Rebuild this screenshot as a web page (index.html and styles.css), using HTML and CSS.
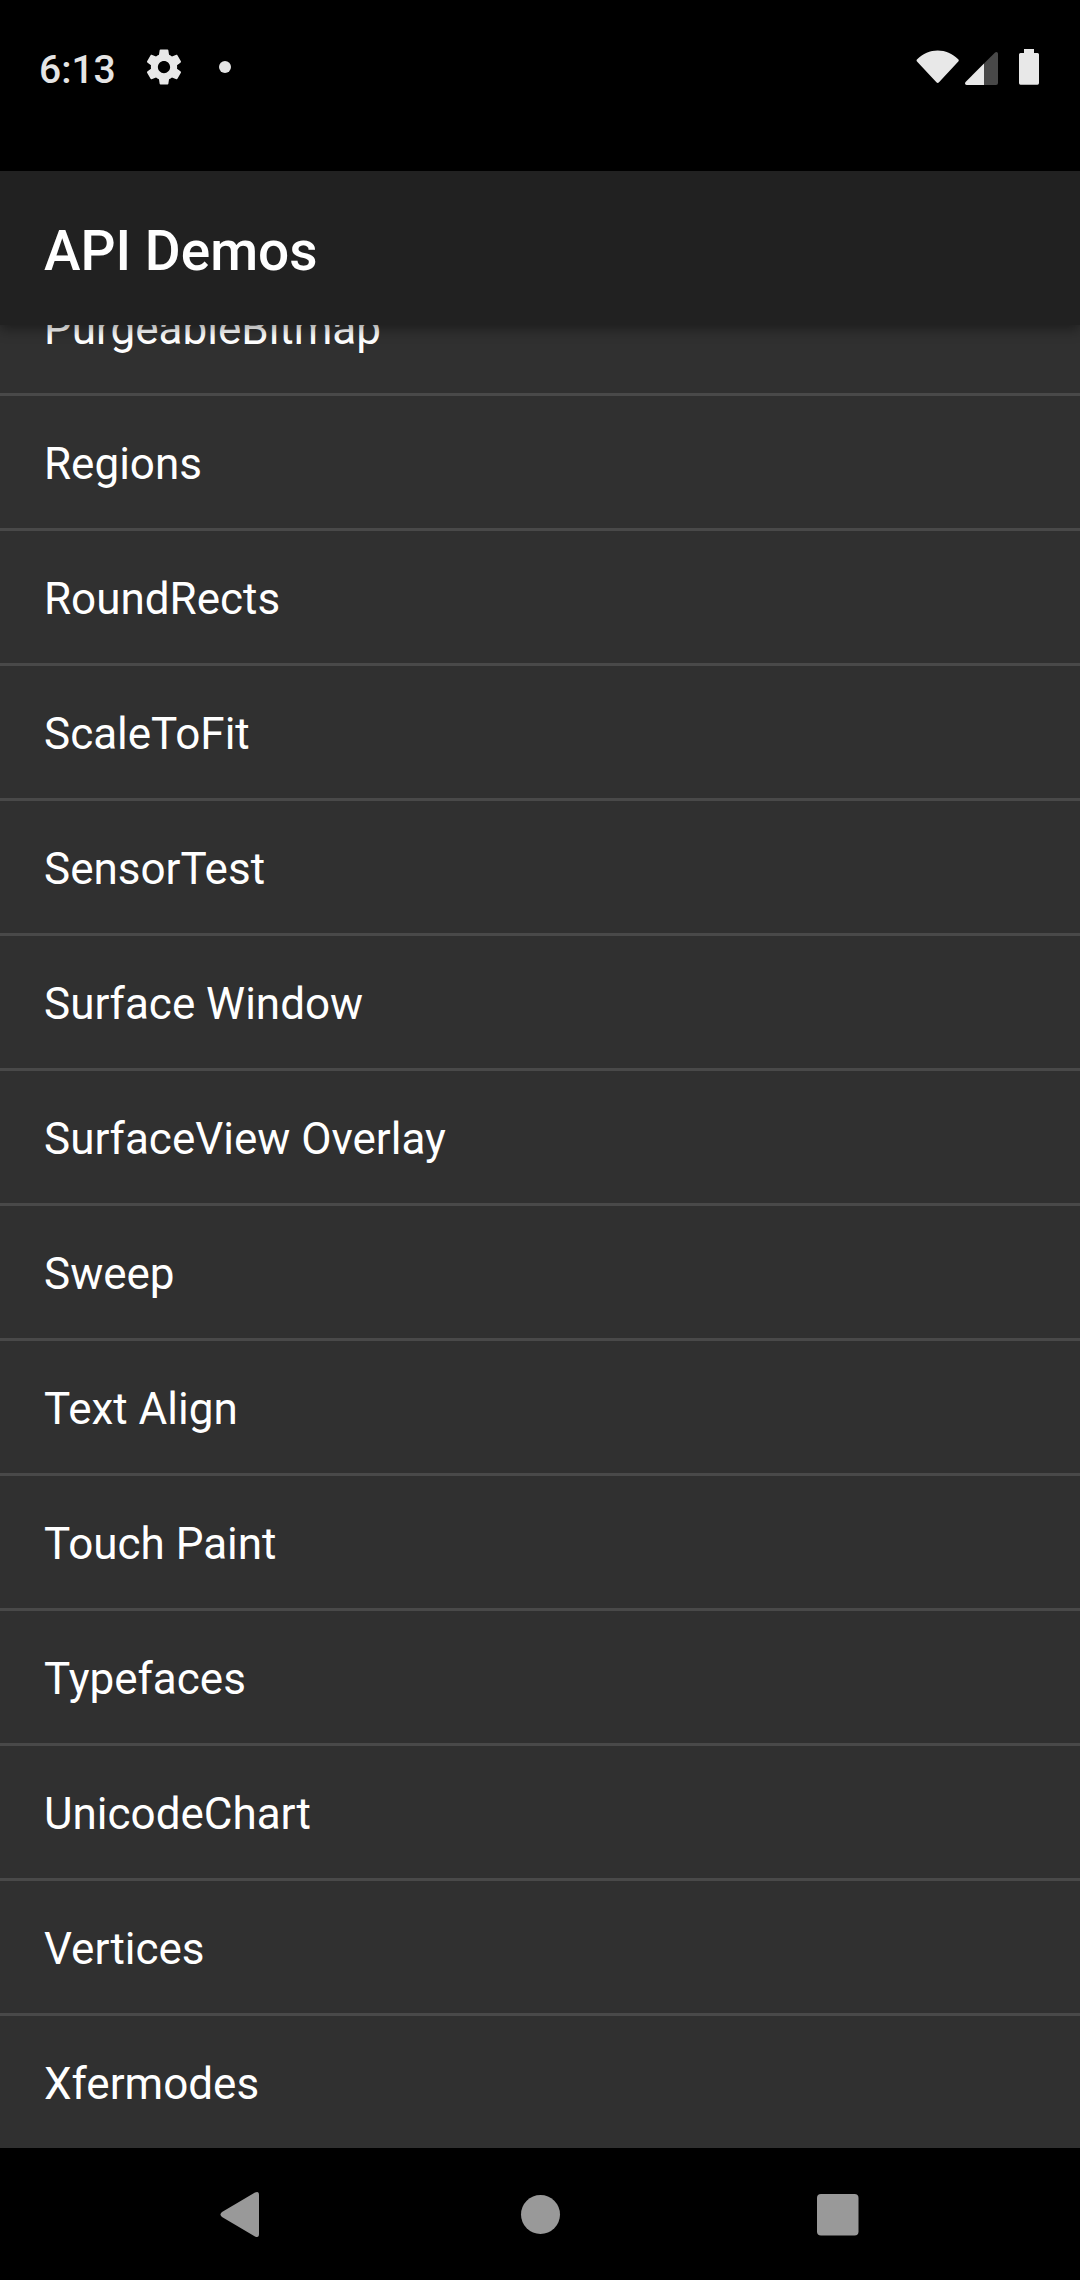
FILE: index.html
```
<!DOCTYPE html>
<html lang="en">
<head>
<meta charset="utf-8">
<meta name="viewport" content="width=device-width, initial-scale=1">
<title>API Demos</title>
<link rel="stylesheet" href="styles.css">
</head>
<body>
<div class="screen">
  <div class="status-bar">
    <div class="status-group">
      <time class="clock">6:13</time>
      <svg class="gear" viewBox="0 0 24 24" aria-label="Settings"><path d="M19.43 12.98c.04-.32.07-.64.07-.98s-.03-.66-.07-.98l2.11-1.65c.19-.15.24-.42.12-.64l-2-3.46c-.12-.22-.39-.3-.61-.22l-2.49 1c-.52-.4-1.08-.73-1.69-.98l-.38-2.65C14.46 2.18 14.25 2 14 2h-4c-.25 0-.46.18-.49.42l-.38 2.65c-.61.25-1.17.59-1.69.98l-2.49-1c-.23-.09-.49 0-.61.22l-2 3.46c-.13.22-.07.49.12.64l2.11 1.65c-.04.32-.07.65-.07.98s.03.66.07.98l-2.11 1.65c-.19.15-.24.42-.12.64l2 3.46c.12.22.39.3.61.22l2.49-1c.52.4 1.08.73 1.69.98l.38 2.65c.03.24.24.42.49.42h4c.25 0 .46-.18.49-.42l.38-2.65c.61-.25 1.17-.59 1.69-.98l2.49 1c.23.09.49 0 .61-.22l2-3.46c.12-.22.07-.49-.12-.64l-2.11-1.65zM12 15.5c-1.93 0-3.5-1.57-3.5-3.5s1.57-3.5 3.5-3.5 3.5 1.57 3.5 3.5-1.57 3.5-3.5 3.5z"/></svg>
      <span class="dot"></span>
    </div>
    <div class="status-group">
      <svg class="wifi" viewBox="0 0 43 36" aria-label="Wi-Fi"><path d="M1.2 10.2C7 4.6 14 1.5 21.7 1.5S36.300 4.600 42.200 10.200Q43.300 11.300 42.300 12.600L23 33.300Q21.700 34.700 20.400 33.300L1 12.600Q0 11.300 1.200 10.200z"/></svg>
      <svg class="signal" viewBox="0 0 33 36" aria-label="Mobile signal"><path class="faint" d="M19 14.500L29.800 3.700Q31 2.600 32.200 3.300Q33 3.800 33 5V34Q33 36 31 36H19z"/><path d="M19 14.500V36H1.800Q.5 36 .1 35Q-.1 33.800.8 32.800z"/></svg>
      <svg class="battery" viewBox="0 0 20 36" aria-label="Battery"><path d="M5 0H15V4H18.500Q20 4 20 5.500V34Q20 35.700 18.500 35.700H1.500Q0 35.700 0 34V5.500Q0 4 1.500 4H5z"/></svg>
    </div>
  </div>

  <header class="app-bar"><h1>API Demos</h1></header>

  <main class="list-view">
    <ul class="list">
      <li><a href="#">PurgeableBitmap</a></li>
      <li><a href="#">Regions</a></li>
      <li><a href="#">RoundRects</a></li>
      <li><a href="#">ScaleToFit</a></li>
      <li><a href="#">SensorTest</a></li>
      <li><a href="#">Surface Window</a></li>
      <li><a href="#">SurfaceView Overlay</a></li>
      <li><a href="#">Sweep</a></li>
      <li><a href="#">Text Align</a></li>
      <li><a href="#">Touch Paint</a></li>
      <li><a href="#">Typefaces</a></li>
      <li><a href="#">UnicodeChart</a></li>
      <li><a href="#">Vertices</a></li>
      <li><a href="#">Xfermodes</a></li>
    </ul>
  </main>

  <nav class="nav-bar">
    <button type="button" aria-label="Back"><svg viewBox="0 0 80 80"><path d="M20 38L53 18.600Q57 16.800 57 21V60Q57 64.200 53 62.400L20 43Q17 40.500 20 38z"/></svg></button>
    <button type="button" aria-label="Home"><svg viewBox="0 0 80 80"><circle cx="40.500" cy="40.500" r="19.500"/></svg></button>
    <button type="button" aria-label="Recent apps"><svg viewBox="0 0 80 80"><rect x="19" y="20" width="41.500" height="41.500" rx="4"/></svg></button>
  </nav>
</div>
</body>
</html>
```
FILE: styles.css
```
* {
  box-sizing: border-box;
}

body {
  margin: 0;
  background: #000;
  color: #fff;
  font-family: Roboto, "Noto Sans", sans-serif;
}

.screen {
  display: flex;
  flex-direction: column;
  height: 100vh;
}

.status-bar {
  display: flex;
  flex: none;
  justify-content: space-between;
  align-items: flex-start;
  height: 171px;
  padding: 46px 41px 0 39px;
}

.status-group {
  display: flex;
  align-items: center;
  height: 42px;
}

.status-group svg {
  display: block;
  height: 36px;
  fill: #e8e8e8;
}

.clock {
  padding-top: 6px;
  color: #e5e5e5;
  font-size: 39px;
  font-weight: 500;
  line-height: 42px;
}

.status-group .gear {
  width: 42px;
  height: 42px;
  margin-left: 27px;
}

.dot {
  width: 12px;
  height: 12px;
  margin-left: 34px;
  border-radius: 50%;
  background: #e5e5e5;
}

.wifi {
  width: 43px;
}

.signal {
  width: 33px;
  margin-left: 6px;
}

.signal .faint {
  fill: #484848;
}

.battery {
  width: 20px;
  margin-left: 21px;
}

.app-bar {
  position: relative;
  z-index: 1;
  display: flex;
  flex: none;
  align-items: center;
  height: 154px;
  padding: 6px 44px 0;
  background: #212121;
  box-shadow: 0 4px 12px rgba(0, 0, 0, 0.4);
}

h1 {
  margin: 0;
  font-size: 55px;
  font-weight: 500;
  line-height: 64px;
}

/* The list is scrolled to its end, so the first row is cut by the app bar. */
.list-view {
  display: flex;
  flex: 1;
  flex-direction: column;
  justify-content: flex-end;
  min-height: 0;
  overflow: hidden;
  background: #303030;
}

.list {
  margin: 0;
  padding: 0;
  list-style: none;
}

.list li + li {
  border-top: 3px solid #494949;
}

.list a {
  display: flex;
  align-items: center;
  height: 132px;
  padding: 4px 44px 0;
  color: #fff;
  font-size: 44px;
  line-height: 52px;
  text-decoration: none;
}

.nav-bar {
  display: flex;
  flex: none;
  justify-content: center;
  align-items: center;
  gap: 78px;
  height: 132px;
}

.nav-bar button {
  display: flex;
  justify-content: center;
  align-items: center;
  width: 220px;
  height: 132px;
  padding: 0;
  border: 0;
  background: none;
}

.nav-bar svg {
  width: 80px;
  height: 80px;
  fill: #999;
}
```
